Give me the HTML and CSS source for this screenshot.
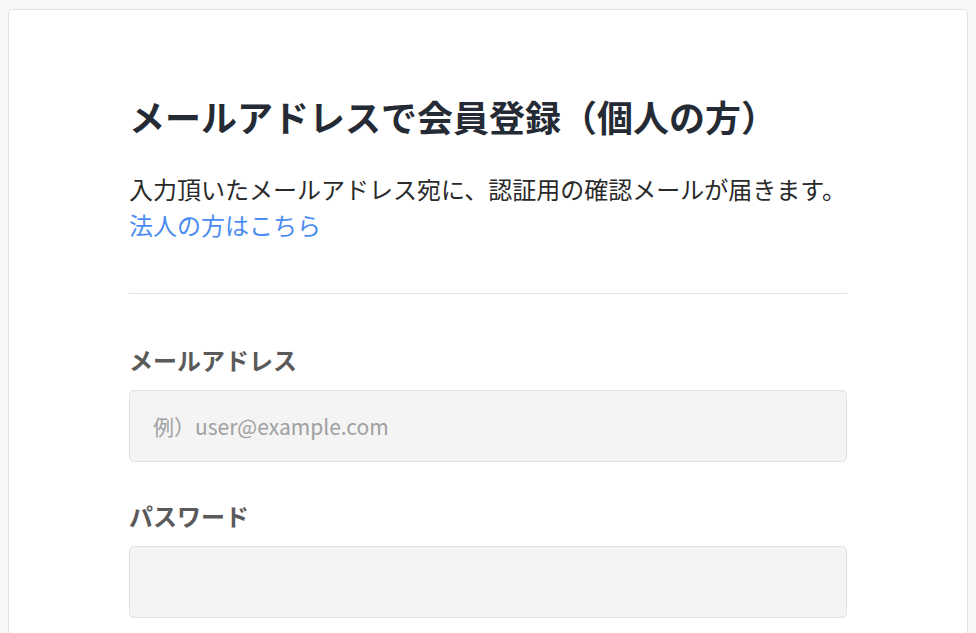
FILE: index.html
```html
<!DOCTYPE html>
<html lang="ja">
<head>
<meta charset="utf-8">
<link rel="stylesheet" href="styles.css">
</head>
<body>
<main class="card">
  <h1 class="title">メールアドレスで会員登録（個人の方）</h1>
  <p class="lead">入力頂いたメールアドレス宛に、認証用の確認メールが届きます。<br><a class="link" href="#">法人の方はこちら</a></p>
  <hr class="divider">
  <form class="form">
    <div class="field">
      <label class="label">メールアドレス</label>
      <input class="input" type="email" placeholder="例）user@example.com">
    </div>
    <div class="field">
      <label class="label">パスワード</label>
      <input class="input" type="password">
    </div>
  </form>
</main>
</body>
</html>
```
FILE: styles.css
```css
html, body {
  margin: 0;
  padding: 0;
  background: #f7f7f7;
  font-family: "Noto Sans CJK JP", "Noto Sans", sans-serif;
}
body {
  padding: 9px 8px 0;
}
.card {
  background: #fff;
  border: 1px solid #e2e2e2;
  border-radius: 5px;
  padding: 79px 120px 40px;
  min-height: 700px;
}
.title {
  margin: 0;
  font-size: 36px;
  line-height: 54px;
  font-weight: 700;
  color: #252b34;
}
.lead {
  margin: 28px 0 0;
  font-size: 24px;
  line-height: 36px;
  color: #2a2a2a;
}
.link {
  color: #4a8cf0;
  text-decoration: none;
}
.divider {
  margin: 50px 0 0;
  border: 0;
  border-top: 1px solid #e2e2e2;
}
.form {
  display: flex;
  flex-direction: column;
  gap: 36px;
  margin-top: 48px;
}
.field {
  display: flex;
  flex-direction: column;
  gap: 12px;
}
.label {
  font-size: 24px;
  line-height: 36px;
  font-weight: 700;
  color: #5a5a5a;
}
.input {
  box-sizing: border-box;
  height: 72px;
  padding: 0 23px;
  background: #f4f4f4;
  border: 1px solid #e0e0e0;
  border-radius: 5px;
  font-family: inherit;
  font-size: 21px;
  color: #333;
}
.input::placeholder {
  color: #a0a0a0;
}
```
